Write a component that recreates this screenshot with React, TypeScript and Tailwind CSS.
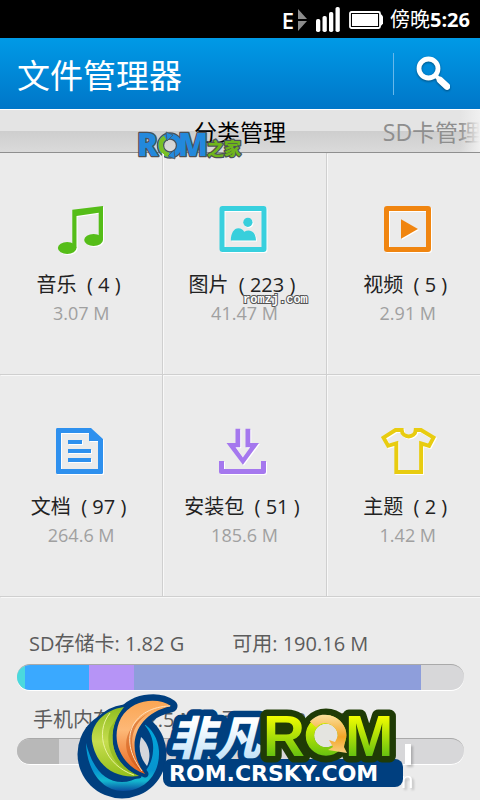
import type { ReactNode } from 'react';

interface Category {
  name: string;
  count: number;
  size: string;
  icon: ReactNode;
}

interface Segment {
  percent: number;
  color: string;
}

const categories: Category[] = [
  {
    name: '音乐',
    count: 4,
    size: '3.07 M',
    icon: (
      <g fill="#55bd18">
        <path d="M19.3 4.7 50 1v34h-4.3V7.7L23.5 11v32h-4.2Z" />
        <ellipse cx="14.2" cy="43" rx="9.3" ry="5.9" />
        <ellipse cx="40.6" cy="35" rx="9.4" ry="5.9" />
      </g>
    ),
  },
  {
    name: '图片',
    count: 223,
    size: '41.47 M',
    icon: (
      <g fill="#38cfdc">
        <rect x="6" y="3.5" width="42" height="41" rx="0.5" fill="none" stroke="#38d0de" strokeWidth="5" strokeLinejoin="round" />
        <circle cx="31.9" cy="17.3" r="4.6" />
        <path d="M14.8 35.6C14.8 28 18.1 23.2 22.3 23.2c2.6 0 4.7 1.3 5.9 3.6 5.6-3.3 11.8-.3 11.8 8.8Z" />
      </g>
    ),
  },
  {
    name: '视频',
    count: 5,
    size: '2.91 M',
    icon: (
      <g fill="#f08510">
        <rect x="6.5" y="3.5" width="42" height="41" rx="0.5" fill="none" stroke="#f08510" strokeWidth="5" strokeLinejoin="round" />
        <path d="M21 14.3 38 24 21 33.7Z" />
      </g>
    ),
  },
  {
    name: '文档',
    count: 97,
    size: '264.6 M',
    icon: (
      <g fill="#2e90ee">
        <path
          fillRule="evenodd"
          d="M4.5 1H38l12 11v33.5a1.500 1.500 0 0 1-1.500 1.500h-44A1.500 1.500 0 0 1 3 45.500v-43A1.500 1.500 0 0 1 4.500 1ZM8 6v36h37V14h-9V6Z"
        />
        <path d="M15 13h14v4H15ZM15 22h23v4H15ZM15 31h23v4H15Z" />
      </g>
    ),
  },
  {
    name: '安装包',
    count: 51,
    size: '185.6 M',
    icon: (
      <g fill="#a578ee">
        <path d="M19.5 1.700V16H10.500L26.900 37.700 43 16h-8.700V1.700h-4.800v18.600h4.700L26.900 30.500 19.500 20.300h4.700V1.700Z" />
        <path d="M5.500 34v10.500h42V34" fill="none" stroke="#a578ee" strokeWidth="5" strokeLinejoin="round" />
      </g>
    ),
  },
  {
    name: '主题',
    count: 2,
    size: '1.42 M',
    icon: (
      <path
        d="M3.500 10.600 15.500 3h6.200c.6 8.600 13.400 8.600 14 0H41l12.500 7.600-4.400 8.200-8-2.500V45H16.300V16.300l-8.200 2.500Z"
        fill="none"
        stroke="#e8cc10"
        strokeWidth="3.900"
      />
    ),
  },
];

const sdSegments: Segment[] = [
  { percent: 1.8, color: '#4bd9dd' },
  { percent: 14.3, color: '#3aa9ff' },
  { percent: 10.1, color: '#b694f6' },
  { percent: 64.2, color: '#8e9edb' },
];

const phoneSegments: Segment[] = [{ percent: 9.4, color: '#b8b8b8' }];

const StatusBar = () => (
  <div className="flex h-[38px] items-center justify-end bg-black pt-0.5 pr-2.5 text-xl text-white">
    <span className="mr-1 text-[22px] font-semibold">E</span>
    <svg className="mr-2" width="10" height="22" viewBox="0 0 10 22" fill="#8c8c8c">
      <path d="M0 0 9 10H0ZM0 12h9L0 22Z" />
    </svg>
    <svg className="mr-2" width="25" height="26" viewBox="0 0 25 26" fill="#fff">
      <rect x="0" y="12" width="4.300" height="13" rx="1.800" />
      <rect x="6.500" y="9" width="4.300" height="16" rx="1.800" />
      <rect x="13" y="5" width="4.300" height="20" rx="1.800" />
      <rect x="19.500" y="0" width="4.300" height="25" rx="1.800" />
    </svg>
    <svg className="mr-1.5" width="35" height="18" viewBox="0 0 35 18">
      <rect x="1" y="1" width="30" height="16" rx="1.500" fill="none" stroke="#fff" strokeWidth="1.800" />
      <rect x="3" y="3" width="26" height="12" fill="#fff" />
      <path d="M31 3.500h1.500l1.500 2v7l-1.500 2H31Z" fill="#fff" />
    </svg>
    <span>
      傍晚<b>5:26</b>
    </span>
  </div>
);

const Header = () => (
  <header className="flex h-[71px] items-center bg-linear-to-b from-[#009ae6] to-[#0076c8] pl-[17px] text-white">
    <h1 className="flex-1 pt-1 text-[33px] leading-none">文件管理器</h1>
    <button type="button" aria-label="搜索" className="flex h-[42px] w-[87px] items-center border-l border-[#68b8ea] pl-[22px]">
      <svg width="34" height="36" viewBox="0 0 34 36" className="drop-shadow-[0_1px_1px_#00000066]">
        <circle cx="12.500" cy="12.500" r="9.500" fill="none" stroke="#fff" strokeWidth="4.800" />
        <path d="m19.500 19.500 4.500 4.500" stroke="#fff" strokeWidth="4" />
        <path d="m24 24 7 6.500" stroke="#fff" strokeWidth="6.500" strokeLinecap="round" />
      </svg>
    </button>
  </header>
);

const Tabs = () => (
  <nav className="relative flex h-11 overflow-hidden border-t border-b border-t-white border-b-[#8f8f8f] bg-[#e4e4e4] pl-[30%] text-[23px]">
    <div className="absolute inset-x-0 bottom-0 h-[21px] bg-linear-to-b from-[#cecece] to-[#dadada]" />
    <button type="button" className="relative w-[57.142%] shrink-0 pt-0.5 text-black">
      分类管理
    </button>
    <button type="button" className="relative w-[57.142%] shrink-0 pt-0.5 text-[#8e8e8e]">
      SD卡管理
    </button>
    <div className="absolute inset-y-0 right-0 w-5 bg-linear-to-r from-transparent to-[#f0f0f0]" />
  </nav>
);

const CategoryCell = ({ name, count, size, icon }: Category) => (
  <button
    type="button"
    className="flex h-[222px] flex-col items-center border-r border-b border-[#cfcfcf] pt-13 shadow-[1px_1px_0_#f8f8f8]"
  >
    <svg width="56" height="50" viewBox="0 0 56 50" className="drop-shadow-[1px_1px_0_#fff]">
      {icon}
    </svg>
    <span className="mt-4 text-xl leading-7 whitespace-pre text-[#222]">{`${name}  ( ${count} ) `}</span>
    <span className="mt-0.5 text-lg leading-6 text-[#a0a0a0]">{size}</span>
  </button>
);

const UsageBar = ({ segments }: { segments: Segment[] }) => (
  <div className="flex h-[26px] overflow-hidden rounded-full border-t border-[#a9a9a9] bg-[#d7d7d9] shadow-[0_1px_0_#fff]">
    {segments.map((segment) => (
      <div key={segment.color} style={{ width: `${segment.percent}%`, backgroundColor: segment.color }} />
    ))}
  </div>
);

const RomHomeMark = () => (
  <svg className="absolute top-[90px] left-[134px]" width="112" height="34" viewBox="0 0 112 34">
    <circle cx="36" cy="17.500" r="9.500" fill="none" stroke="#4c5156" strokeWidth="7.500" />
    <g fill="#2389dc" stroke="#4c5156" strokeWidth="2.500" strokeLinejoin="round" paintOrder="stroke">
      <text x="3" y="28" fontFamily="Open Sans" fontWeight="800" fontSize="31">
        R
      </text>
      <text x="44" y="28" fontFamily="Open Sans" fontWeight="800" fontSize="31">
        M
      </text>
      <text x="73" y="27" fill="#6fb51b" fontFamily="Noto Sans CJK SC" fontWeight="900" fontSize="17">
        之家
      </text>
    </g>
    <circle cx="36" cy="17.500" r="9.500" fill="none" stroke="#2389dc" strokeWidth="5" />
    <path d="M31 9.500C24 14 26 25 35 27" fill="none" stroke="#79c025" strokeWidth="4.500" />
    <path d="m32 4 7 3-6 6ZM41 31l-7-3 6-6Z" fill="#2389dc" stroke="#4c5156" strokeWidth="0.700" />
  </svg>
);

const CrskyMark = () => (
  <svg className="absolute top-[88px] left-[70px]" width="350" height="115" viewBox="0 0 350 115">
    <defs>
      <linearGradient id="orange" x1="0" y1="0" x2="0" y2="1">
        <stop offset="0" stopColor="#fba654" />
        <stop offset="0.400" stopColor="#fdb877" />
        <stop offset="1" stopColor="#e8651c" />
      </linearGradient>
      <linearGradient id="lime" x1="0" y1="0" x2="0" y2="1">
        <stop offset="0" stopColor="#8fbd20" />
        <stop offset="0.500" stopColor="#c6dd4e" />
        <stop offset="1" stopColor="#94bf1c" />
      </linearGradient>
      <linearGradient id="sea" x1="0" y1="0" x2="0" y2="1">
        <stop offset="0" stopColor="#00a9dd" />
        <stop offset="0.700" stopColor="#0794cf" />
        <stop offset="0.850" stopColor="#14b8cf" />
        <stop offset="1" stopColor="#0a4da0" />
      </linearGradient>
      <linearGradient id="ice" x1="0" y1="0" x2="0" y2="1">
        <stop offset="0.300" stopColor="#fff" />
        <stop offset="0.900" stopColor="#bfe1f8" />
      </linearGradient>
      <linearGradient id="rom" gradientUnits="userSpaceOnUse" x1="0" y1="30" x2="0" y2="72">
        <stop offset="0" stopColor="#f6ff00" />
        <stop offset="1" stopColor="#63c010" />
      </linearGradient>
      <linearGradient id="gold" gradientUnits="userSpaceOnUse" x1="0" y1="30" x2="0" y2="70">
        <stop offset="0" stopColor="#fbdf9c" />
        <stop offset="0.550" stopColor="#f3a526" />
        <stop offset="1" stopColor="#f9d489" />
      </linearGradient>
    </defs>

    {/* faded mark that shows at the right edge */}
    <g fill="#fff" className="drop-shadow-[2px_2px_1px_#00000033]">
      <rect x="335" y="59" width="6" height="21" />
      <text x="331" y="103" fontFamily="Liberation Sans" fontSize="22">
        n
      </text>
    </g>

    {/* emblem */}
    <circle cx="52" cy="69" r="44.500" fill="#003f7f" />
    <path
      d="M101 21C88 12 62 14 51 33 40 54 50 80 75 89 58 65 60 30 101 21Z"
      fill="#003f7f"
      stroke="#003f7f"
      strokeWidth="13"
      strokeLinejoin="round"
    />
    <path d="M71 52c8 7 11 19 6 29-7-8-9-18-6-29Z" fill="#d5d6dc" />
    <path
      d="M16 58c1 28 16 48 37 48 24 0 37-19 36-40-1-13-7-22-16-28 8 9 11 18 10 28-1 18-14 31-31 31C34 97 22 82 16 58Z"
      fill="url(#sea)"
    />
    <path
      d="M54 22C32 25 20 42 22 56c4 25 23 38 47 35C41 79 34 48 54 22Z"
      fill="url(#lime)"
      stroke="#003f7f"
      strokeWidth="5"
      strokeLinejoin="round"
      paintOrder="stroke"
    />
    <path d="M54 22C34 48 41 79 69 91 49 87 33 66 40 43Z" fill="#83af15" opacity="0.600" />
    <path d="M40 28C24 48 34 80 64 90" fill="none" stroke="#e9f29b" strokeWidth="1" />
    <path
      d="M101 21C88 12 62 14 51 33 40 54 50 80 75 89 56 65 62 30 101 21Z"
      fill="url(#orange)"
      stroke="#003f7f"
      strokeWidth="7"
      strokeLinejoin="round"
      paintOrder="stroke"
    />
    <path d="M80 27C58 41 56 66 75 89 50 72 48 45 80 27Z" fill="#c8500f" opacity="0.500" />
    <path d="M100 21C64 22 46 52 72 86" fill="none" stroke="#fee0bd" strokeWidth="1" />

    {/* backing plates */}
    <rect x="93" y="74" width="240" height="28" rx="8" fill="#003f7f" />
    <text
      x="99"
      y="70"
      fontFamily="Noto Sans CJK SC"
      fontSize="46"
      fontWeight="900"
      fontStyle="italic"
      fill="url(#ice)"
      stroke="#003f7f"
      strokeWidth="13"
      strokeLinejoin="round"
      paintOrder="stroke"
    >
      非凡
    </text>
    <circle cx="256" cy="50.500" r="16" fill="none" stroke="#1f3b06" strokeWidth="22" />
    <g
      fontFamily="Liberation Sans"
      fontSize="58"
      fontWeight="bold"
      fill="url(#rom)"
      stroke="#1f3b06"
      strokeWidth="13"
      strokeLinejoin="round"
      paintOrder="stroke"
    >
      <text x="193" y="71">
        R
      </text>
      <text x="275" y="71">
        M
      </text>
    </g>
    <circle cx="256" cy="50.500" r="12" fill="#e4e4e0" />
    <circle cx="256" cy="50.500" r="16" fill="none" stroke="url(#rom)" strokeWidth="8.500" />
    <path d="M243 39.500c12-13 31-1 29 13" fill="none" stroke="url(#gold)" strokeWidth="8.500" />
    <path d="m276 52-2 10 3 6-19-3 5-3-4-7 6 2 3-6Z" fill="url(#gold)" />

    <text x="99" y="96" fontFamily="DejaVu Sans" fontWeight="bold" fontSize="22" fill="#fff">
      ROM.CRSKY.COM
    </text>
  </svg>
);

const App = () => (
  <div className="relative min-h-screen overflow-hidden bg-[#ebebeb] font-['Open_Sans','Noto_Sans_CJK_SC',sans-serif]">
    <StatusBar />
    <div className="relative">
      <Header />
      <Tabs />
      <RomHomeMark />
    </div>

    <main>
      {/* the third column runs a little past the right edge */}
      <div className="relative -mr-2.5 grid grid-cols-3">
        {categories.map((category) => (
          <CategoryCell key={category.name} {...category} />
        ))}
        <span className="absolute top-[139px] left-[243px] font-['Liberation_Mono',monospace] text-xs leading-4 font-bold text-white [paint-order:stroke] [-webkit-text-stroke:2px_#555]">
          romzj.com
        </span>
      </div>

      <section className="relative pt-[33px] pr-4 pb-9 pl-[17px] text-xl leading-7 text-[#5c5c5c]">
        <p className="mb-1.5 flex gap-12 pl-3">
          <span>SD存储卡: 1.82 G</span>
          <span>可用: 190.16 M</span>
        </p>
        <UsageBar segments={sdSegments} />
        <p className="mt-4 mb-1 flex gap-6 pl-4">
          <span>手机内存: 162.5 M</span>
          <span>可用: 142.29 M</span>
        </p>
        <UsageBar segments={phoneSegments} />
        <CrskyMark />
      </section>
    </main>
  </div>
);

export default App;
